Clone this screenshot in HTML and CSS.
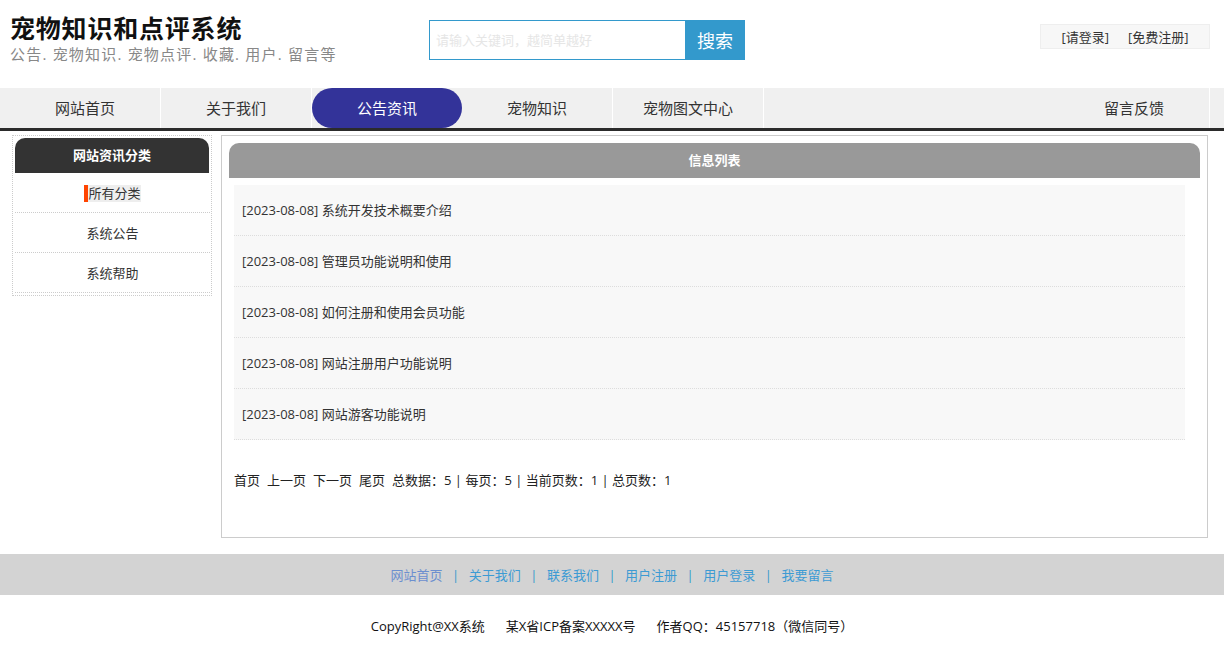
FILE: index.html
```html
<!DOCTYPE html>
<html lang="zh-CN">
<head>
<meta charset="utf-8">
<title>宠物知识和点评系统</title>
<link rel="stylesheet" href="styles.css">
</head>
<body>
<div class="header">
  <div class="brand">
    <div class="brand-title">宠物知识和点评系统</div>
    <div class="brand-sub">公告. 宠物知识. 宠物点评. 收藏. 用户. 留言等</div>
  </div>
  <div class="search">
    <input class="search-input" type="text" placeholder="请输入关键词，越简单越好">
    <button class="search-btn">搜索</button>
  </div>
  <div class="login">
    <a href="#">[请登录]</a>
    <a href="#">[免费注册]</a>
  </div>
</div>
<div class="nav">
  <a class="nav-item" href="#">网站首页</a>
  <a class="nav-item" href="#">关于我们</a>
  <a class="nav-item active" href="#">公告资讯</a>
  <a class="nav-item" href="#">宠物知识</a>
  <a class="nav-item" href="#">宠物图文中心</a>
  <a class="nav-item nav-right" href="#">留言反馈</a>
</div>
<div class="content">
  <div class="sidebar">
    <div class="side-head">网站资讯分类</div>
    <div class="side-item"><span class="current">所有分类</span></div>
    <div class="side-item">系统公告</div>
    <div class="side-item">系统帮助</div>
  </div>
  <div class="main">
    <div class="main-head">信息列表</div>
    <ul class="list">
      <li>[2023-08-08] 系统开发技术概要介绍</li>
      <li>[2023-08-08] 管理员功能说明和使用</li>
      <li>[2023-08-08] 如何注册和使用会员功能</li>
      <li>[2023-08-08] 网站注册用户功能说明</li>
      <li>[2023-08-08] 网站游客功能说明</li>
    </ul>
    <div class="pager"><span class="pg">首页</span><span class="pg">上一页</span><span class="pg">下一页</span><span class="pg">尾页</span>总数据：5 | 每页：5 | 当前页数：1 | 总页数：1</div>
  </div>
</div>
<div class="foot-links">
  <a href="#" class="visited">网站首页</a><span class="sep">|</span>
  <a href="#">关于我们</a><span class="sep">|</span>
  <a href="#">联系我们</a><span class="sep">|</span>
  <a href="#">用户注册</a><span class="sep">|</span>
  <a href="#">用户登录</a><span class="sep">|</span>
  <a href="#">我要留言</a>
</div>
<div class="copyright"><span class="cp">CopyRight@XX系统</span><span class="cp">某X省ICP备案XXXXX号</span><span>作者QQ：45157718（微信同号）</span></div>
</body>
</html>
```

FILE: styles.css
```css
* { box-sizing: border-box; }
body {
  margin: 0;
  font-family: "Open Sans", "Noto Sans CJK SC", sans-serif;
  font-size: 13px;
  color: #333;
  background: #fff;
}
a { text-decoration: none; color: inherit; }

.header {
  height: 88px;
  display: flex;
  align-items: flex-start;
  padding-left: 10px;
}
.brand { width: 419px; padding-top: 10px; }
.brand-title {
  font-family: "Noto Sans CJK SC", sans-serif;
  font-size: 25px;
  font-weight: bold;
  color: #111;
  line-height: 34px;
  letter-spacing: 0.8px;
}
.brand-sub {
  font-size: 15px;
  color: #888;
  line-height: 20px;
  letter-spacing: 1.2px;
}
.search {
  display: flex;
  margin-top: 20px;
  height: 40px;
}
.search-input {
  width: 256px;
  height: 40px;
  border: 1px solid #3399cc;
  border-right: none;
  padding: 0 6px;
  font-family: inherit;
  font-size: 13px;
  outline: none;
}
.search-input::placeholder { color: #e6e6e6; }
.search-btn {
  width: 60px;
  height: 40px;
  border: none;
  background: #3399cc;
  color: #fff;
  font-family: inherit;
  font-size: 18px;
  padding: 0;
}
.login {
  margin-left: auto;
  margin-right: 14px;
  margin-top: 24px;
  width: 170px;
  height: 25px;
  background: #f7f7f7;
  border: 1px solid #eee;
  display: flex;
  justify-content: center;
  align-items: center;
  gap: 19px;
  font-size: 13px;
  color: #333;
}

.nav {
  height: 43px;
  background: #f0f0f0;
  border-bottom: 3px solid #2b2b2b;
  display: flex;
  padding: 0 14px 0 10px;
}
.nav-item {
  width: 151px;
  height: 40px;
  line-height: 40px;
  text-align: center;
  font-size: 15px;
  color: #333;
  border-right: 1px solid #fff;
}
.nav-item.active {
  width: 150px;
  background: #333399;
  color: #fff;
  border-radius: 20px;
  border-right: none;
}
.nav-right {
  margin-left: auto;
  width: 151px;
}

.content {
  display: flex;
  align-items: flex-start;
  padding: 4px 16px 0 12px;
  gap: 9px;
}
.sidebar {
  width: 200px;
  border: 1px dotted #ccc;
  padding: 2px 1px 2px 2px;
}
.side-head {
  height: 35px;
  line-height: 35px;
  background: #333;
  color: #fff;
  font-weight: bold;
  text-align: center;
  font-size: 13px;
  border-radius: 10px 10px 0 0;
  margin-right: 1px;
}
.side-item {
  height: 40px;
  line-height: 40px;
  text-align: center;
  border-bottom: 1px dotted #ccc;
  font-size: 13px;
  color: #333;
}
.current {
  display: inline-block;
  line-height: 17px;
  background: #eee;
  border-left: 4px solid #ff4400;
}

.main {
  width: 987px;
  height: 403px;
  border: 1px solid #ccc;
  padding: 7px;
}
.main-head {
  height: 35px;
  line-height: 35px;
  background: #999;
  color: #fff;
  font-weight: bold;
  text-align: center;
  font-size: 13px;
  border-radius: 10px 10px 0 0;
}
.list {
  list-style: none;
  margin: 7px 0 0 5px;
  padding: 0;
  width: 951px;
  background: #f8f8f8;
}
.list li {
  height: 51px;
  line-height: 51px;
  border-bottom: 1px dotted #ddd;
  padding-left: 8px;
  font-size: 13px;
  color: #333;
}
.pager {
  margin: 31px 0 0 5px;
  font-size: 13px;
  color: #222;
  line-height: 18px;
}
.pg { margin-right: 7px; }

.foot-links {
  margin-top: 16px;
  height: 41px;
  background: #d3d3d3;
  display: flex;
  justify-content: center;
  align-items: center;
  font-size: 13px;
  color: #3399cc;
}
.foot-links a { color: #3d9bd3; }
.foot-links a.visited { color: #6c8fcf; }
.sep { margin: 0 9.5px; color: #3399cc; }
.copyright {
  text-align: center;
  font-size: 13px;
  color: #111;
  line-height: 18px;
  margin-top: 22px;
}
.cp { margin-right: 21px; }
```
